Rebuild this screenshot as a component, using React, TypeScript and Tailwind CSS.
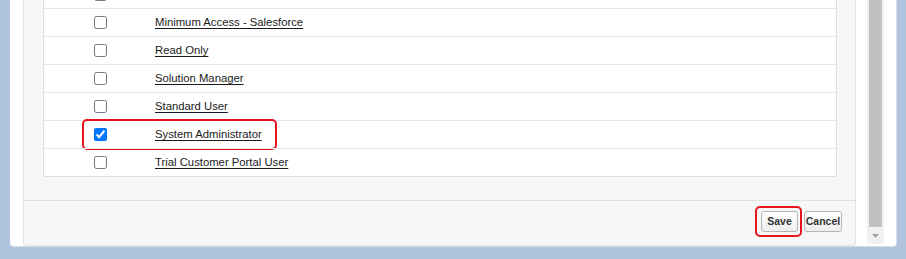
const profiles = [
  { name: "", checked: false },
  { name: "Minimum Access - Salesforce", checked: false },
  { name: "Read Only", checked: false },
  { name: "Solution Manager", checked: false },
  { name: "Standard User", checked: false },
  { name: "System Administrator", checked: true, highlight: true },
  { name: "Trial Customer Portal User", checked: false },
];

function Row({ name, checked, highlight, first }: { name: string; checked: boolean; highlight?: boolean; first?: boolean }) {
  return (
    <div className={`relative flex h-[28px] items-center ${first ? "" : "border-t border-[#e8e8e8]"}`}>
      <div className="flex w-[111px] justify-center pl-[1px]">
        <input
          type="checkbox"
          defaultChecked={checked}
          className="m-0 h-[13px] w-[13px] accent-[#0075ff]"
        />
      </div>
      {name && (
        <a href="#" className="text-[11.3px] text-[#1a1a1a] underline underline-offset-[2px]">
          {name}
        </a>
      )}
      {highlight && (
        <div className="pointer-events-none absolute left-[38px] top-[-2px] h-[31px] w-[195px] rounded-[5px] border-2 border-[#e8141d]" />
      )}
    </div>
  );
}

export default function App() {
  return (
    <div className="h-[259px] w-[906px] overflow-hidden bg-[#b0c4de] pl-[10px] font-['Liberation_Sans',Arial,sans-serif]">
      <div className="-mt-[20px] flex h-[267px] w-[887px] rounded-b-[4px] border-r border-b border-[#d6dbe3] bg-white pl-[13px]">
        <div className="flex w-[833px] flex-col">
          <div className="flex flex-1 flex-col rounded-b-[4px] border-x border-b border-[#e2e2e2] bg-[#f7f7f7]">
            <div className="ml-[19px] mr-[18px] border border-t-0 border-[#e0e0e0] bg-white">
              {profiles.map((p, i) => (
                <Row key={i} name={p.name} checked={p.checked} highlight={p.highlight} first={i === 0} />
              ))}
            </div>
            <div className="h-[23px]" />
            <div className="flex h-[45px] items-start justify-end border-t border-[#e0e0e0] pr-[13px] pt-[10px]">
              <div className="relative flex">
                <button className="flex h-[21px] w-[37px] items-center justify-center rounded-[3px] border border-[#b5b5b5] bg-gradient-to-b from-white to-[#ededed] p-0 text-[10.5px] font-bold text-[#333]">
                  Save
                </button>
                <div className="pointer-events-none absolute left-[-6px] top-[-5px] h-[31px] w-[47px] rounded-[5px] border-2 border-[#e8141d]" />
              </div>
              <button className="ml-[6px] flex h-[21px] w-[38px] items-center justify-center rounded-[3px] border border-[#b5b5b5] bg-gradient-to-b from-white to-[#ededed] p-0 text-[10.5px] font-bold text-[#333]">
                Cancel
              </button>
            </div>
          </div>
          <div className="mb-[1px] h-[2px] bg-[#5f6b88]" />
        </div>
        <div className="ml-[11px] flex h-[264px] w-[17px] flex-col bg-[#f1f1f1]">
          <div className="mx-[2px] flex-1 bg-[#c1c1c1]" />
          <div className="flex h-[17px] items-center justify-center">
            <svg width="7" height="4" viewBox="0 0 7 4">
              <path d="M0 0h7L3.5 4z" fill="#a3a3a3" />
            </svg>
          </div>
        </div>
      </div>
    </div>
  );
}
